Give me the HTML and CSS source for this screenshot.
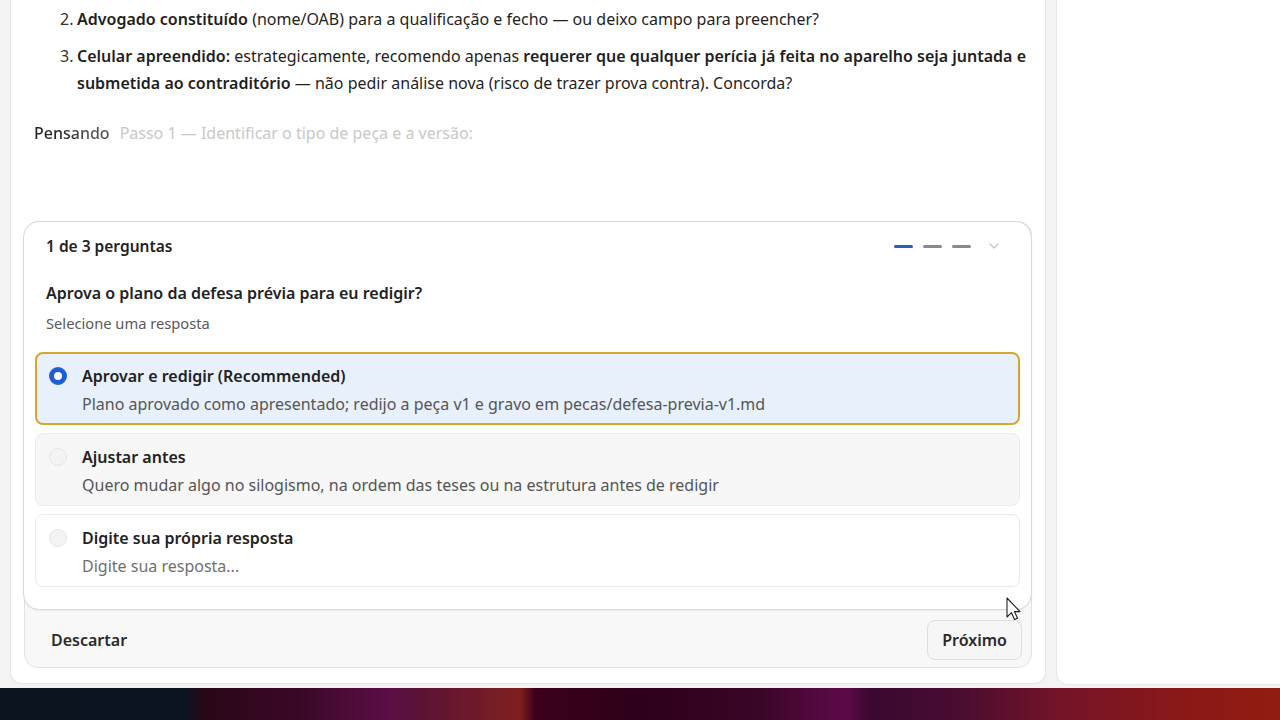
FILE: index.html
```html
<!DOCTYPE html>
<html lang="pt-BR">
<head>
<meta charset="utf-8">
<title>Defesa prévia</title>
<link rel="stylesheet" href="styles.css">
</head>
<body>
<div class="workspace">
  <main class="chat">
    <ol class="plan-list">
      <li><span class="num">2.</span><p><b>Advogado constituído</b> (nome/OAB) para a qualificação e fecho — ou deixo campo para preencher?</p></li>
      <li><span class="num">3.</span><p><b>Celular apreendido:</b> estrategicamente, recomendo apenas <b>requerer que qualquer perícia já feita no aparelho seja juntada e submetida ao contraditório</b> — não pedir análise nova (risco de trazer prova contra). Concorda?</p></li>
    </ol>

    <div class="thinking"><span class="thinking-label">Pensando</span><span class="thinking-step">Passo 1 — Identificar o tipo de peça e a versão:</span></div>

    <section class="question-box">
      <div class="question-card">
        <header class="q-head">
          <span class="q-count">1 de 3 perguntas</span>
          <div class="q-progress">
            <span class="dash active"></span>
            <span class="dash"></span>
            <span class="dash"></span>
            <svg class="chev" width="10" height="6" viewBox="0 0 10 6"><path d="M1 1l4 4 4-4" fill="none" stroke="#c4c4c4" stroke-width="1.2" stroke-linecap="round" stroke-linejoin="round"/></svg>
          </div>
        </header>
        <h2 class="q-title">Aprova o plano da defesa prévia para eu redigir?</h2>
        <p class="q-hint">Selecione uma resposta</p>

        <div class="options">
          <div class="option selected">
            <span class="radio"></span>
            <div class="opt-text">
              <div class="opt-title">Aprovar e redigir (Recommended)</div>
              <div class="opt-desc">Plano aprovado como apresentado; redijo a peça v1 e gravo em pecas/defesa-previa-v1.md</div>
            </div>
          </div>
          <div class="option muted">
            <span class="radio"></span>
            <div class="opt-text">
              <div class="opt-title">Ajustar antes</div>
              <div class="opt-desc">Quero mudar algo no silogismo, na ordem das teses ou na estrutura antes de redigir</div>
            </div>
          </div>
          <div class="option">
            <span class="radio"></span>
            <div class="opt-text">
              <div class="opt-title">Digite sua própria resposta</div>
              <div class="opt-desc placeholder">Digite sua resposta...</div>
            </div>
          </div>
        </div>
      </div>
      <footer class="q-foot">
        <button class="btn-ghost">Descartar</button>
        <button class="btn-next">Próximo</button>
      </footer>
    </section>
  </main>
  <aside class="side"></aside>
</div>
<div class="desktop"></div>

<svg class="cursor" width="15" height="24" viewBox="0 0 15 24"><path d="M1 1v19l4.5-4.3 3 6.8 3-1.3-3-6.6H14z" fill="#fff" stroke="#222" stroke-width="1.1" stroke-linejoin="round"/></svg>
</body>
</html>
```

FILE: styles.css
```css
* { box-sizing: border-box; }

html, body {
  margin: 0;
  height: 720px;
  overflow: hidden;
}

body {
  background: #f3f3f3;
  font-family: "Noto Sans", "Open Sans", sans-serif;
  color: #1f1f1f;
  position: relative;
}

.workspace {
  height: 688px;
  display: flex;
  gap: 10px;
  padding-left: 10px;
}

.chat {
  width: 1036px;
  height: 684px;
  background: #fff;
  border: 1px solid #e4e4e4;
  border-top: none;
  border-radius: 0 0 12px 12px;
  padding: 6px 13px 0 0;
}

.side {
  flex: 1;
  height: 685px;
  background: #fff;
  border: 1px solid #e8e8e8;
  border-top: none;
  border-right: none;
  border-radius: 0 0 0 12px;
}

/* numbered plan items */
.plan-list {
  list-style: none;
  margin: 0;
  padding: 0 0 0 49px;
  font-size: 16px;
  line-height: 27px;
}
.plan-list li {
  display: flex;
  margin-bottom: 10px;
}
.plan-list .num {
  width: 17px;
  flex: none;
  color: #333;
}
.plan-list p {
  margin: 0;
  width: 950px;
}
.plan-list b { font-weight: 600; }

.thinking {
  margin: 23px 0 0 23px;
  font-size: 16px;
  line-height: 27px;
}
.thinking-label {
  font-weight: 500;
  background: linear-gradient(90deg, #262626 0%, #262626 40%, #5a5a5a 75%, #4a4a4a 100%);
  -webkit-background-clip: text;
  background-clip: text;
  color: transparent;
  margin-right: 10px;
}
.thinking-step { color: #c9c9c9; }

/* question panel */
.question-box {
  margin: 74px 0 0 13px;
  background: #f8f8f8;
  border: 1px solid #e2e2e2;
  border-radius: 14px;
}

.question-card {
  margin: -1px -1px 0 -2px;
  background: #fff;
  border: 1px solid #d9d9d9;
  border-radius: 16px;
  padding: 13px 11px 22px 11px;
  box-shadow: 0 1px 2px rgba(0,0,0,0.05);
}

.q-head {
  display: flex;
  justify-content: space-between;
  align-items: center;
  height: 22px;
  padding: 0 21px 0 11px;
}
.q-count {
  font-size: 15.5px;
  font-weight: 600;
  color: #222;
}
.q-progress {
  display: flex;
  align-items: center;
  gap: 10px;
}
.dash {
  width: 19px;
  height: 3px;
  border-radius: 2px;
  background: #8a8a8a;
}
.dash.active { background: #2c5db8; }
.chev { margin-left: 8px; }

.q-title {
  margin: 25px 0 0 11px;
  font-size: 16px;
  line-height: 22px;
  font-weight: 600;
  color: #222;
}
.q-hint {
  margin: 9px 0 0 11px;
  font-size: 14.7px;
  line-height: 20px;
  color: #5a5a5a;
}

.options {
  margin-top: 19px;
  display: flex;
  flex-direction: column;
  gap: 8px;
}
.option {
  display: flex;
  align-items: flex-start;
  gap: 15px;
  height: 73px;
  padding: 12px 12px 0 13px;
  border: 1px solid #ebebeb;
  border-radius: 8px;
  background: #fff;
}
.option.muted { background: #f7f7f7; }
.option.selected {
  background: #e8f0fc;
  border: 2px solid #d5a82c;
  padding: 11px 11px 0 12px;
}

.radio {
  flex: none;
  width: 18px;
  height: 18px;
  margin-top: 2px;
  border-radius: 50%;
  background: #f3f3f3;
  border: 1px solid #e6e6e6;
}
.selected .radio {
  background: #fff;
  border: 5.5px solid #1c5ed6;
}

.opt-title {
  font-size: 16px;
  line-height: 22px;
  font-weight: 600;
  color: #222;
}
.opt-desc {
  margin-top: 6px;
  font-size: 16px;
  line-height: 22px;
  color: #555;
}
.opt-desc.placeholder { color: #707070; }

.q-foot {
  display: flex;
  justify-content: space-between;
  align-items: center;
  padding: 10px 9px 7px 14px;
}
.btn-ghost, .btn-next {
  font-family: inherit;
  font-size: 16px;
  font-weight: 600;
  color: #2a2a2a;
  height: 40px;
  border-radius: 8px;
  cursor: pointer;
}
.btn-ghost {
  background: transparent;
  border: none;
  padding: 0 12px;
}
.btn-next {
  background: #f6f6f6;
  border: 1px solid #dedede;
  padding: 0 14px;
}

/* desktop wallpaper strip below the window */
.desktop {
  height: 32px;
  background: linear-gradient(90deg,
    #0a1520 0px, #0b1622 185px, #2a0618 205px, #3a0826 300px,
    #5c0e46 390px, #5a1234 420px, #7a1e24 505px, #801f1f 520px,
    #3c001c 535px, #2e0019 640px, #3a0528 760px, #5e0a48 845px,
    #3a0830 870px, #4a0c30 960px, #741428 1060px, #8a1818 1180px, #921c10 1280px);
}

.cursor {
  position: absolute;
  left: 1006px;
  top: 597px;
}
```
